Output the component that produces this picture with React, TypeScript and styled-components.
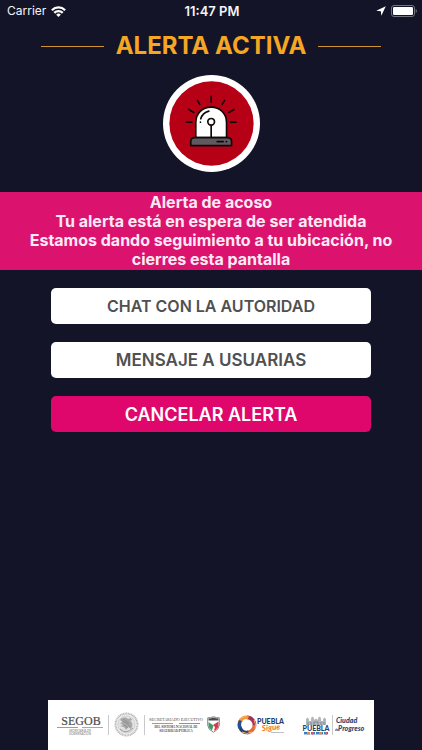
import React from 'react';
import styled, { createGlobalStyle, css } from 'styled-components';

const GlobalStyle = createGlobalStyle`
  * { box-sizing: border-box; }
  body {
    margin: 0;
    background: #141428;
    font-family: Inter, "Liberation Sans", sans-serif;
  }
`;

const Screen = styled.div`
  display: flex;
  flex-direction: column;
  min-height: 100vh;
  background: #141428;
`;

const StatusBar = styled.header`
  display: grid;
  grid-template-columns: 1fr auto 1fr;
  align-items: center;
  height: 22px;
  padding: 0 5px 0 7px;
  color: #f4f4f8;
  font-size: 12px;
  line-height: 16px;
`;

const StatusGroup = styled.div<{ $end?: boolean }>`
  display: flex;
  align-items: center;
  gap: 5px;
  justify-content: ${(p) => (p.$end ? 'flex-end' : 'flex-start')};
`;

const Clock = styled.time`
  font-size: 13px;
  font-weight: 600;
`;

const TitleRow = styled.div`
  display: flex;
  align-items: center;
  gap: 12px;
  height: 48px;
  padding: 0 41px;
`;

const Rule = styled.span`
  flex: 1;
  height: 1px;
  background: #d0912f;
`;

const Title = styled.h1`
  margin: 0;
  color: #f5a623;
  font-size: 24px;
  line-height: 32px;
  font-weight: 700;
  white-space: nowrap;
`;

const Badge = styled.div`
  display: flex;
  justify-content: center;
  padding: 5px 0 20px;
`;

const Banner = styled.section`
  padding: 1px 20px;
  background: #db136f;
  color: #fdeaf5;
  font-size: 16px;
  line-height: 19px;
  font-weight: 700;
  text-align: center;
`;

const Line = styled.p`
  margin: 0;
`;

const Actions = styled.main`
  display: flex;
  flex-direction: column;
  gap: 18px;
  padding: 18px 51px;
`;

const ActionButton = styled.button<{ $size: number; $danger?: boolean }>`
  height: 36px;
  padding: 0;
  border: 0;
  border-radius: 5px;
  background: #fff;
  color: #505050;
  font-family: inherit;
  font-size: ${(p) => p.$size}px;
  font-weight: 600;
  cursor: pointer;
  ${(p) =>
    p.$danger &&
    css`
      background: #df066c;
      color: #fff;
    `}
`;

const Sponsors = styled.footer`
  display: flex;
  align-items: flex-start;
  justify-content: space-between;
  height: 50px;
  margin: auto 48px 0;
  padding: 12px 6px 0 9px;
  background: #fff;
`;

const SponsorGroup = styled.div<{ $gap: number }>`
  display: flex;
  align-items: center;
  height: 25px;
  gap: ${(p) => p.$gap}px;
`;

const Divider = styled.span`
  width: 1px;
  height: 20px;
  background: #c9c9c9;
`;

const WifiIcon = () => (
  <svg width="15" height="11" viewBox="0 0 15 11" aria-label="Wi-Fi">
    <g fill="none" stroke="#fff" strokeWidth="2.3">
      <path d="M.9 4.200a9.300 9.300 0 0 1 13.200 0" />
      <path d="M3.300 6.900a5.900 5.900 0 0 1 8.400 0" />
    </g>
    <path d="M5.200 8.700a3.200 3.200 0 0 1 4.600 0L7.500 11z" fill="#fff" />
  </svg>
);

const LocationIcon = () => (
  <svg width="10" height="10" viewBox="0 0 10 10" aria-label="Ubicación">
    <path d="M9.800.2.2 4.800l4.700.4.400 4.600z" fill="#fff" />
  </svg>
);

const BatteryIcon = () => (
  <svg width="26" height="12" viewBox="0 0 26 12" aria-label="Batería">
    <rect x=".5" y=".5" width="23" height="11" rx="2.5" fill="none" stroke="#73737f" />
    <rect x="2" y="2" width="20" height="8" rx="1.2" fill="#fff" />
    <path d="M24.700 4v4q1.200-.7 1.200-2t-1.200-2z" fill="#73737f" />
  </svg>
);

const SirenIcon = () => (
  <svg width="97" height="97" viewBox="24 19 290 290" role="img" aria-label="Sirena">
    <circle cx="169" cy="164" r="145" fill="#fff" />
    <circle cx="169" cy="164" r="126" fill="#b60016" />
    <g fill="none" stroke="#120808" strokeWidth="5" strokeLinecap="round">
      <path d="M168 83v17M127 95l7 12M208 95l-7 12M101 122l15 9M236 122l-15 9M94 160h16M226 160h16" />
    </g>
    <path
      d="M122 206v-45c0-28 20-46 46-46s46 18 46 46v45z"
      fill="#fff"
      stroke="#120808"
      strokeWidth="5"
    />
    <path
      d="M107 230v-12q0-12 12-12h98q12 0 12 12v12z"
      fill="#5f5a60"
      stroke="#120808"
      strokeWidth="5"
      strokeLinejoin="round"
    />
    <g fill="none" stroke="#120808" strokeWidth="5" strokeLinecap="round">
      <path d="M137 150q5-18 24-23M136 160v.1M168 170v34M186 218h18M213 218h1" />
      <circle cx="168" cy="159" r="10" fill="#fff" />
    </g>
  </svg>
);

const SegobLogo = () => (
  <svg width="46" height="24" viewBox="0 0 46 24" role="img" aria-label="SEGOB">
    <text
      x="24"
      y="12"
      textAnchor="middle"
      fontFamily="Liberation Serif, serif"
      fontSize="12"
      fill="#4c4c4c"
      stroke="#4c4c4c"
      strokeWidth=".2"
    >
      SEGOB
    </text>
    <path d="M0 14.500h21" stroke="#69b894" />
    <path d="M25 14.500h21" stroke="#e98a98" />
    <g fontFamily="Lato, sans-serif" fontSize="3" fill="#777" textAnchor="middle">
      <text x="23" y="19">SECRETARÍA DE</text>
      <text x="23" y="22">GOBERNACIÓN</text>
    </g>
  </svg>
);

const SealLogo = () => (
  <svg width="25" height="25" viewBox="0 0 25 25" role="img" aria-label="Estados Unidos Mexicanos">
    <circle cx="12.5" cy="12.5" r="11" fill="#f0f0f0" stroke="#b4b4b4" strokeWidth="2" strokeDasharray="1 .6" />
    <circle cx="12.5" cy="12.5" r="8.6" fill="#e2e2e2" stroke="#bdbdbd" strokeWidth=".6" />
    <path
      d="M6 8c2-3 6-3 8-1l3-1 1 2-2 1c3 1 3 5 1 8l-3-2-2 3-2-3-4-1 3-1-3-2 3-1-3-2z"
      fill="#a9a9a9"
    />
    <path d="M8 9l5 2 3 4M9 7l6 4M6 17q6 6 13-1M10 13l4 3" fill="none" stroke="#8b8b8b" strokeWidth=".8" />
  </svg>
);

const SecretariadoLogo = () => (
  <svg width="52" height="20" viewBox="1 0 52 20" overflow="visible" role="img" aria-label="Secretariado Ejecutivo">
    <g fontFamily="Liberation Serif, serif" textAnchor="middle" fill="#4c4c4c">
      <text x="27" y="6" fontSize="4">
        <tspan fontSize="5">S</tspan>ECRETARIADO <tspan fontSize="5">E</tspan>JECUTIVO
      </text>
      <g fontWeight="700" fontSize="3">
        <text x="27" y="13">
          DEL <tspan fontSize="4">S</tspan>ISTEMA <tspan fontSize="4">N</tspan>ACIONAL DE
        </text>
        <text x="27" y="17">
          <tspan fontSize="4">S</tspan>EGURIDAD <tspan fontSize="4">P</tspan>ÚBLICA
        </text>
      </g>
    </g>
    <path d="M3 8.500h21" stroke="#69b894" />
    <path d="M30 8.500h21" stroke="#e36b7b" />
  </svg>
);

const ShieldLogo = () => (
  <svg width="13" height="17" viewBox="0 0 13 17" role="img" aria-label="Seguridad Pública">
    <path d="M.7 1.800Q3.800 2 6.500.7 9.200 2 12.300 1.800V9q0 4.500-5.800 7.300Q.7 13.500.7 9z" fill="#fff" stroke="#858585" />
    <path d="M1.500 2.500q3 0 5-1 2 1 5 1v2h-10z" fill="#4b4b4d" />
    <path d="M1.500 6l5 3.500-1.500 5Q1.500 12 1.500 9z" fill="#3f9a68" />
    <path d="M11.500 5.500 6 9l2 2-1 4q4.500-2.500 4.500-6z" fill="#d8394b" />
  </svg>
);

const PueblaSigueLogo = () => (
  <svg width="48" height="20" viewBox="0 0 48 20" role="img" aria-label="Puebla Sigue">
    <g fill="none" strokeWidth="3.600">
      <path d="M10 2.400a7.500 7.500 0 0 1 7.400 8.500" stroke="#a82e5b" />
      <path d="M17.400 10a7.500 7.500 0 0 1-7.500 7.500" stroke="#e46a32" />
      <path d="M11.500 17.300a7.500 7.500 0 0 1-8.600-5" stroke="#27436f" />
      <path d="M3.200 13a7.500 7.500 0 0 1 1-8.300" stroke="#284e9b" />
      <path d="M3.600 5.500A7.500 7.500 0 0 1 11.500 2.500" stroke="#f29a38" />
    </g>
    <path d="M1 6q3-4 8-4.500M5 17q5 3 10 0M17 5q2.500 4 1 9" fill="none" stroke="#f4b06b" strokeWidth="1" />
    <text x="20" y="9" fontFamily="Lato, sans-serif" fontWeight="900" fontSize="7" fill="#213a6b">
      PUEBLA
    </text>
    <text
      x="25"
      y="16"
      fontFamily="Lato, sans-serif"
      fontStyle="italic"
      fontWeight="900"
      fontSize="8"
      fill="#ef7c32"
      transform="rotate(-5 25 16)"
    >
      Sigue
    </text>
    <path d="M34 17.500h13" stroke="#a9b0bc" strokeWidth=".8" />
  </svg>
);

const PueblaCityLogo = () => (
  <svg width="28" height="20" viewBox="-1 0 28 20" role="img" aria-label="Puebla">
    <path
      d="M3 10V4l1.500-1.500L6 4v2h2V3l1.500-1.500L11 3v2l2-1.500L15 5V3l1.500-1.500L18 3v3h2V4l1.500-1.500L23 4v6z"
      fill="#b3b6bc"
    />
    <path d="M5 10V7M8 10V7M11 10V7h4v3M18 10V7M21 10V7" stroke="#777c86" strokeWidth=".8" fill="none" />
    <text
      x="13"
      y="16"
      textAnchor="middle"
      fontFamily="Lato, sans-serif"
      fontWeight="900"
      fontSize="7"
      fill="#243f70"
    >
      PUEBLA
    </text>
    <path d="M1 18.200h24" stroke="#3a7fc0" strokeWidth="2.400" />
    <path d="M4 18.200h3M16 18.200h3" stroke="#ef8b36" strokeWidth="2.400" />
    <path d="M9 18.200h2M22 18.200h2" stroke="#d65a7a" strokeWidth="2.400" />
    <path d="M7 18.200h1M12 18.200h1M20 18.200h1" stroke="#fff" strokeWidth="2.400" />
  </svg>
);

const ProgresoLogo = () => (
  <svg width="33" height="20" viewBox="0 0 33 20" role="img" aria-label="Ciudad de Progreso">
    <g fontFamily="Lato, sans-serif" fontStyle="italic" fontWeight="900" fill="#243f70">
      <text x="1" y="8" fontSize="7">Ciudad</text>
      <text x="0" y="16" fontSize="7">
        <tspan fontSize="3">de</tspan>Progreso
      </text>
    </g>
  </svg>
);

export default function App() {
  return (
    <>
      <GlobalStyle />
      <Screen>
        <StatusBar>
          <StatusGroup>
            <span>Carrier</span>
            <WifiIcon />
          </StatusGroup>
          <Clock>11:47 PM</Clock>
          <StatusGroup $end>
            <LocationIcon />
            <BatteryIcon />
          </StatusGroup>
        </StatusBar>
        <TitleRow>
          <Rule />
          <Title>ALERTA ACTIVA</Title>
          <Rule />
        </TitleRow>
        <Badge>
          <SirenIcon />
        </Badge>
        <Banner role="status">
          <Line>Alerta de acoso</Line>
          <Line>Tu alerta está en espera de ser atendida</Line>
          <Line>Estamos dando seguimiento a tu ubicación, no cierres esta pantalla</Line>
        </Banner>
        <Actions>
          <ActionButton type="button" $size={16}>CHAT CON LA AUTORIDAD</ActionButton>
          <ActionButton type="button" $size={17}>MENSAJE A USUARIAS</ActionButton>
          <ActionButton type="button" $size={18} $danger>
            CANCELAR ALERTA
          </ActionButton>
        </Actions>
        <Sponsors>
          <SponsorGroup $gap={5}>
            <SegobLogo />
            <Divider />
            <SealLogo />
            <Divider />
            <SecretariadoLogo />
            <ShieldLogo />
          </SponsorGroup>
          <SponsorGroup $gap={3}>
            <PueblaSigueLogo />
          </SponsorGroup>
          <SponsorGroup $gap={2}>
            <PueblaCityLogo />
            <Divider />
            <ProgresoLogo />
          </SponsorGroup>
        </Sponsors>
      </Screen>
    </>
  );
}
